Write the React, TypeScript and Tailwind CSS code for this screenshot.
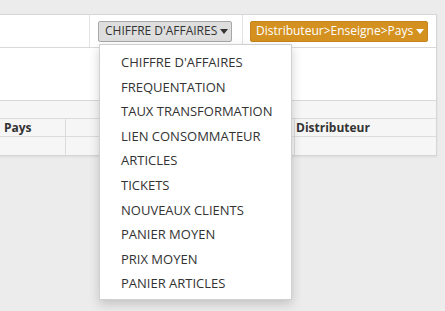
import React from 'react'

const items = [
  "CHIFFRE D'AFFAIRES",
  'FREQUENTATION',
  'TAUX TRANSFORMATION',
  'LIEN CONSOMMATEUR',
  'ARTICLES',
  'TICKETS',
  'NOUVEAUX CLIENTS',
  'PANIER MOYEN',
  'PRIX MOYEN',
  'PANIER ARTICLES',
]

function Caret({ color }: { color: string }) {
  return (
    <svg width="8" height="5" viewBox="0 0 8 5" className="ml-[3px] mt-[1px] shrink-0">
      <path d="M0 0h8L4 5z" fill={color} />
    </svg>
  )
}

export default function App() {
  return (
    <div
      className="relative w-[445px] h-[311px] overflow-hidden bg-[#ececec] pt-[14px]"
      style={{ fontFamily: '"Open Sans", "Liberation Sans", sans-serif' }}
    >
      <div className="w-[438px] ml-[-1px] bg-white border border-[#d6d6d6] shadow-[0_1px_2px_rgba(0,0,0,0.08)]">
        {/* toolbar */}
        <div className="flex h-[33px] border-b border-[#d9d9d9]">
          <div className="w-[90px] border-r border-[#e3e3e3]" />
          <div className="w-[153px] flex items-center pl-[8px] border-r border-[#e3e3e3]">
            <button className="flex items-center whitespace-nowrap h-[21px] w-[134px] pl-[6px] pr-0 bg-[#dedede] border border-[#a8a8a8] rounded-[2px] text-[12px] text-[#333] leading-none">
              CHIFFRE D'AFFAIRES
              <Caret color="#333" />
            </button>
          </div>
          <div className="flex-1 flex items-center pl-[7px]">
            <button className="flex items-center whitespace-nowrap h-[21px] w-[178px] pl-[5px] pr-0 bg-[#d4911f] border border-[#c4851a] rounded-[2px] text-[12px] text-white leading-none">
              Distributeur&gt;Enseigne&gt;Pays
              <Caret color="#fff" />
            </button>
          </div>
        </div>
        {/* chart area */}
        <div className="h-[53px] border-b border-[#d9d9d9]" />
        {/* table */}
        <div className="h-[18px] bg-[#f6f6f6] border-b border-[#dcdcdc]" />
        <div className="flex h-[18px] bg-[#f6f6f6] border-b border-[#dcdcdc] text-[12px] font-bold text-[#333] leading-[17px]">
          <div className="w-[66px] pl-[4px] border-r border-[#dcdcdc]">Pays</div>
          <div className="w-[229px] border-r border-[#dcdcdc]" />
          <div className="flex-1 pl-[1px]">Distributeur</div>
        </div>
        <div className="flex h-[18px] bg-[#f6f6f6]">
          <div className="w-[66px] border-r border-[#dcdcdc]" />
          <div className="w-[229px] border-r border-[#dcdcdc]" />
          <div className="flex-1" />
        </div>
      </div>

      {/* dropdown menu */}
      <div className="absolute left-[99px] top-[44px] w-[193px] h-[256px] bg-white border border-[#d0d0d0] shadow-[0_4px_10px_rgba(0,0,0,0.18)] pt-[5px]">
        {items.map((it) => (
          <div key={it} className="h-[24.6px] leading-[24.6px] pl-[21px] text-[13px] text-[#333] whitespace-nowrap">
            {it}
          </div>
        ))}
      </div>
    </div>
  )
}
